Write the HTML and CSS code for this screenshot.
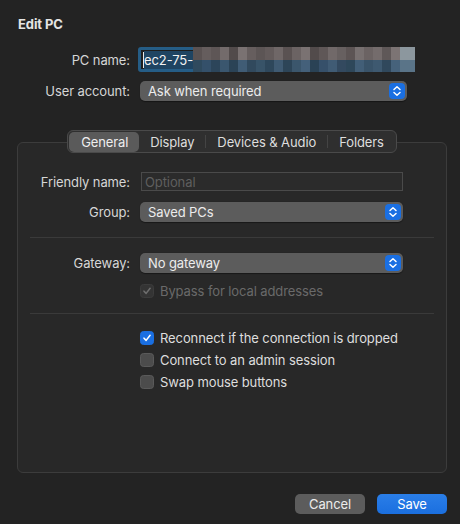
FILE: index.html
```html
<!DOCTYPE html>
<html>
<head>
<meta charset="utf-8">
<link rel="stylesheet" href="styles.css">
</head>
<body>
<div class="dialog">
  <div class="title">Edit PC</div>

  <div class="top-form">
    <div class="row row-name">
      <div class="label">PC name:</div>
      <div class="focus-field">
        <div class="field-inner">
          <span class="caret"></span><span class="sel">ec2-75-</span>
        </div>
        <div class="pixels"><div class="px-top"></div><div class="px-bottom"></div></div>
      </div>
    </div>
    <div class="row row-user">
      <div class="label">User account:</div>
      <div class="popup popup-wide">
        <span class="popup-text">Ask when required</span>
        <span class="stepper"><svg width="16" height="16" viewBox="0 0 16 16"><path d="M5 6.5 L8 3.8 L11 6.5" fill="none" stroke="#fff" stroke-width="1.5" stroke-linecap="round" stroke-linejoin="round"/><path d="M5 9.5 L8 12.2 L11 9.5" fill="none" stroke="#fff" stroke-width="1.5" stroke-linecap="round" stroke-linejoin="round"/></svg></span>
      </div>
    </div>
  </div>

  <div class="tabs-wrap">
    <div class="tabs">
      <div class="tab selected">General</div>
      <div class="tab">Display</div>
      <div class="sep"></div>
      <div class="tab">Devices &amp; Audio</div>
      <div class="sep"></div>
      <div class="tab">Folders</div>
    </div>
  </div>

  <div class="box">
    <div class="row row-friendly">
      <div class="label">Friendly name:</div>
      <div class="textfield"><span class="placeholder">Optional</span></div>
    </div>
    <div class="row row-group">
      <div class="label">Group:</div>
      <div class="popup">
        <span class="popup-text">Saved PCs</span>
        <span class="stepper"><svg width="16" height="16" viewBox="0 0 16 16"><path d="M5 6.5 L8 3.8 L11 6.5" fill="none" stroke="#fff" stroke-width="1.5" stroke-linecap="round" stroke-linejoin="round"/><path d="M5 9.5 L8 12.2 L11 9.5" fill="none" stroke="#fff" stroke-width="1.5" stroke-linecap="round" stroke-linejoin="round"/></svg></span>
      </div>
    </div>
    <div class="divider div1"></div>
    <div class="row row-gateway">
      <div class="label">Gateway:</div>
      <div class="popup">
        <span class="popup-text">No gateway</span>
        <span class="stepper"><svg width="16" height="16" viewBox="0 0 16 16"><path d="M5 6.5 L8 3.8 L11 6.5" fill="none" stroke="#fff" stroke-width="1.5" stroke-linecap="round" stroke-linejoin="round"/><path d="M5 9.5 L8 12.2 L11 9.5" fill="none" stroke="#fff" stroke-width="1.5" stroke-linecap="round" stroke-linejoin="round"/></svg></span>
      </div>
    </div>
    <div class="check-row disabled row-bypass">
      <span class="cb cb-disabled"><svg width="14" height="14" viewBox="0 0 14 14"><path d="M3.5 7.2 L6 9.8 L10.6 3.8" fill="none" stroke="#6e6e6e" stroke-width="1.8" stroke-linecap="round" stroke-linejoin="round"/></svg></span>
      <span class="cb-label">Bypass for local addresses</span>
    </div>
    <div class="divider div2"></div>
    <div class="checks">
      <div class="check-row">
        <span class="cb cb-on"><svg width="14" height="14" viewBox="0 0 14 14"><path d="M3.5 7.2 L6 9.8 L10.6 3.8" fill="none" stroke="#fff" stroke-width="1.8" stroke-linecap="round" stroke-linejoin="round"/></svg></span>
        <span class="cb-label">Reconnect if the connection is dropped</span>
      </div>
      <div class="check-row">
        <span class="cb"></span>
        <span class="cb-label">Connect to an admin session</span>
      </div>
      <div class="check-row">
        <span class="cb"></span>
        <span class="cb-label">Swap mouse buttons</span>
      </div>
    </div>
  </div>

  <div class="buttons">
    <div class="btn btn-cancel">Cancel</div>
    <div class="btn btn-save">Save</div>
  </div>
</div>
</body>
</html>
```

FILE: styles.css
```css
html, body {
  margin: 0;
  padding: 0;
}
body {
  width: 460px;
  height: 524px;
  background: #232323;
  color: #dcdcdc;
  font-family: "Inter", "Liberation Sans", sans-serif;
  font-size: 13px;
  letter-spacing: -0.1px;
  overflow: hidden;
}
.dialog {
  display: flex;
  flex-direction: column;
  height: 524px;
}
.title {
  font-weight: 700;
  font-size: 13px;
  color: #e4e4e4;
  line-height: 16px;
  margin: 16px 0 0 18px;
}
.top-form {
  display: flex;
  flex-direction: column;
  margin-top: 15px;
}
.row {
  display: flex;
  align-items: center;
}
.label {
  width: 130px;
  text-align: right;
  flex-shrink: 0;
  color: #d6d6d6;
  line-height: 16px;
}
.top-form .label { width: 130px; }
.row-name { height: 25px; }
.focus-field {
  margin-left: 8px;
  width: 271px;
  height: 25px;
  box-sizing: border-box;
  border: 3px solid #255d86;
  border-radius: 3px;
  background: #1e1e1e;
  position: relative;
  display: flex;
  align-items: center;
}
.field-inner {
  display: flex;
  align-items: center;
  height: 19px;
  padding-left: 2px;
}
.caret {
  width: 1px;
  height: 16px;
  background: #e8e8e8;
}
.sel {
  background: #1f4462;
  color: #f2f2f2;
  line-height: 18px;
  padding-right: 1px;
}
.pixels {
  position: absolute;
  left: 52px;
  top: -3px;
  width: 222px;
  height: 25px;
  display: flex;
  flex-direction: column;
}
.px-top {
  flex: 1;
  background: linear-gradient(to right,
    #5a5252 0 9px, #655d5d 9px 18px, #5e5656 18px 27px, #736b6b 27px 36px,
    #524b4b 36px 45px, #7a7272 45px 54px, #665e5e 54px 63px, #5c5555 63px 72px,
    #635b5b 72px 81px, #6f6767 81px 90px, #5a5252 90px 99px, #6b6363 99px 108px,
    #7a7272 108px 117px, #524b4b 117px 126px, #5f5757 126px 135px, #716969 135px 144px,
    #676060 144px 153px, #5c5454 153px 162px, #777070 162px 171px, #6b6363 171px 180px,
    #746c6c 180px 189px, #5f5858 189px 198px, #7c7474 198px 207px, #8c979e 207px 222px);
}
.px-bottom {
  flex: 1;
  background: linear-gradient(to right,
    #2f4a5e 0 9px, #34506a 9px 18px, #2c455a 18px 27px, #3a566e 27px 36px,
    #2b4356 36px 45px, #405c75 45px 54px, #31495d 54px 63px, #385368 63px 72px,
    #2e475b 72px 81px, #3f5a72 81px 90px, #2d4558 90px 99px, #3b566c 99px 108px,
    #44607a 108px 117px, #2a4255 117px 126px, #36506a 126px 135px, #405b74 135px 144px,
    #33495f 144px 153px, #2e475a 153px 162px, #425e77 162px 171px, #395369 171px 180px,
    #3e5970 180px 189px, #30485c 189px 198px, #46627b 198px 207px, #5a7488 207px 222px);
}
.row-user { margin-top: 9px; height: 20px; }
.popup {
  margin-left: 10px;
  height: 20px;
  width: 263px;
  box-sizing: border-box;
  background: #5c5c5c;
  border-radius: 5px;
  display: flex;
  align-items: center;
  justify-content: space-between;
  padding: 0 2px 0 8px;
  box-shadow: 0 0.5px 1px rgba(0,0,0,0.4);
}
.popup-wide { width: 267px; }
.popup-text {
  color: #ececec;
  line-height: 16px;
}
.stepper {
  width: 16px;
  height: 16px;
  border-radius: 4px;
  background: #1a6fe2;
  display: flex;
  align-items: center;
  justify-content: center;
}
.stepper svg { display: block; }

.tabs-wrap {
  display: flex;
  justify-content: center;
  margin-top: 29px;
  padding-left: 4px;
  position: relative;
  z-index: 1;
  margin-bottom: -11px;
}
.tabs {
  display: flex;
  align-items: center;
  height: 21px;
  background: #2f2f2f;
  border: 0.5px solid #4a4a4a;
  border-radius: 6px;
  padding: 0 1px;
  box-sizing: content-box;
}
.tab {
  height: 20px;
  line-height: 20px;
  padding: 0 11px;
  color: #dedede;
  border-radius: 5px;
}
.tab.selected {
  background: #5a5a5a;
  color: #eeeeee;
  padding: 0 12px;
  width: 46px;
  text-align: center;
}
.sep {
  width: 1px;
  height: 13px;
  background: #444;
}

.box {
  margin: 0 13px 0 17px;
  height: 331px;
  border: 1px solid #3c3c3c;
  border-radius: 6px;
  background: #282828;
  display: flex;
  flex-direction: column;
  box-sizing: border-box;
}
.box .label { width: 112px; }
.row-friendly { margin-top: 29px; height: 19px; }
.textfield {
  margin-left: 11px;
  width: 262px;
  height: 19px;
  box-sizing: border-box;
  border: 1px solid #4a4a4a;
  background: #2b2b2b;
  display: flex;
  align-items: center;
  padding-left: 3px;
}
.placeholder { color: #5f5f5f; line-height: 16px; }
.row-group { margin-top: 11px; height: 20px; }
.divider {
  height: 1px;
  background: #3a3a3a;
  margin: 0 12px;
}
.div1 { margin-top: 15px; }
.row-gateway { margin-top: 15px; height: 20px; }
.check-row {
  display: flex;
  align-items: center;
  height: 22px;
  padding-left: 122px;
}
.row-bypass { margin-top: 7px; }
.div2 { margin-top: 11px; }
.checks { margin-top: 13px; display: flex; flex-direction: column; }
.cb {
  width: 14px;
  height: 14px;
  box-sizing: border-box;
  border-radius: 3.5px;
  background: #4c4c4c;
  border: 0.5px solid #5a5a5a;
  display: flex;
  align-items: center;
  justify-content: center;
  flex-shrink: 0;
}
.cb svg { display: block; }
.cb-on { background: #1a6fe2; border-color: #1a6fe2; }
.cb-disabled { background: #343434; border-color: #3c3c3c; }
.cb-label {
  margin-left: 6px;
  color: #dedede;
  line-height: 16px;
}
.disabled .cb-label { color: #6a6a6a; }

.buttons {
  display: flex;
  justify-content: flex-end;
  gap: 12px;
  margin: 21px 13px 0 0;
}
.btn {
  width: 70px;
  height: 20px;
  border-radius: 5px;
  text-align: center;
  line-height: 20px;
  color: #ececec;
}
.btn-cancel { background: #5c5c5c; }
.btn-save { background: linear-gradient(#2a7ee8, #1b6fdf); color: #fff; }
```
